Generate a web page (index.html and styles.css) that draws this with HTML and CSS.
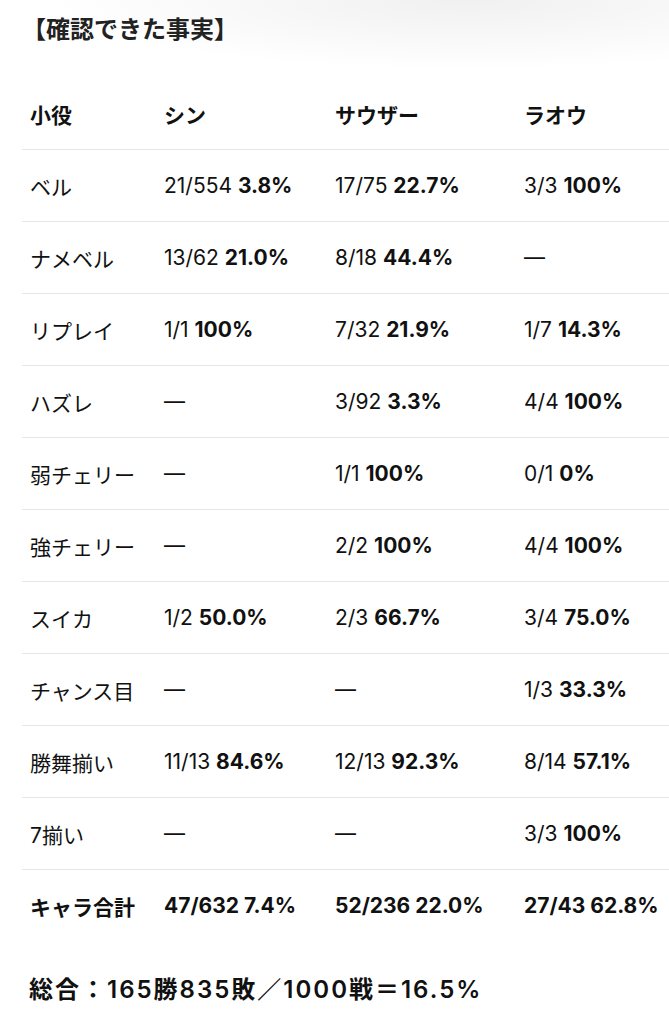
FILE: index.html
```html
<!DOCTYPE html>
<html lang="ja">
<head>
<meta charset="utf-8">
<link rel="stylesheet" href="styles.css">
</head>
<body>
<div class="page">
  <h3 class="title">【確認できた事実】</h3>
  <table class="stats">
    <colgroup>
      <col class="c1"><col class="c2"><col class="c3"><col class="c4">
    </colgroup>
    <thead>
      <tr><th>小役</th><th>シン</th><th>サウザー</th><th>ラオウ</th></tr>
    </thead>
    <tbody>
      <tr><td>ベル</td><td>21/554 <b>3.8%</b></td><td>17/75 <b>22.7%</b></td><td>3/3 <b>100%</b></td></tr>
      <tr><td>ナメベル</td><td>13/62 <b>21.0%</b></td><td>8/18 <b>44.4%</b></td><td>—</td></tr>
      <tr><td>リプレイ</td><td>1/1 <b>100%</b></td><td>7/32 <b>21.9%</b></td><td>1/7 <b>14.3%</b></td></tr>
      <tr><td>ハズレ</td><td>—</td><td>3/92 <b>3.3%</b></td><td>4/4 <b>100%</b></td></tr>
      <tr><td>弱チェリー</td><td>—</td><td>1/1 <b>100%</b></td><td>0/1 <b>0%</b></td></tr>
      <tr><td>強チェリー</td><td>—</td><td>2/2 <b>100%</b></td><td>4/4 <b>100%</b></td></tr>
      <tr><td>スイカ</td><td>1/2 <b>50.0%</b></td><td>2/3 <b>66.7%</b></td><td>3/4 <b>75.0%</b></td></tr>
      <tr><td>チャンス目</td><td>—</td><td>—</td><td>1/3 <b>33.3%</b></td></tr>
      <tr><td>勝舞揃い</td><td>11/13 <b>84.6%</b></td><td>12/13 <b>92.3%</b></td><td>8/14 <b>57.1%</b></td></tr>
      <tr><td>7揃い</td><td>—</td><td>—</td><td>3/3 <b>100%</b></td></tr>
      <tr class="total"><td>キャラ合計</td><td>47/632 7.4%</td><td>52/236 22.0%</td><td>27/43 62.8%</td></tr>
    </tbody>
  </table>
  <p class="summary">総合：165勝835敗／1000戦＝16.5%</p>
</div>
</body>
</html>
```

FILE: styles.css
```css
html, body {
  margin: 0;
  padding: 0;
}
body {
  background:
    radial-gradient(ellipse 420px 70px at 70% 0, rgba(0,0,0,0.06), rgba(0,0,0,0) 100%),
    #fff;
  background-repeat: no-repeat;
  color: #111;
  font-family: Inter, "Noto Sans CJK JP", sans-serif;
  overflow-x: hidden;
}
.page {
  padding: 13px 0 0 22px;
  width: 680px;
}
.title {
  margin: 0;
  font-size: 24px;
  line-height: 34px;
  font-weight: 700;
  color: #222;
}
.stats {
  margin-top: 31px;
  border-collapse: collapse;
  width: 654px;
  table-layout: fixed;
  font-size: 21px;
}
.c1 { width: 134px; }
.c2 { width: 171px; }
.c3 { width: 189px; }
.c4 { width: 160px; }
.stats th,
.stats td {
  height: 71px;
  padding: 0 0 0 8px;
  text-align: left;
  vertical-align: middle;
  white-space: nowrap;
}
.stats th {
  font-weight: 700;
}
.stats td {
  font-weight: 400;
}
.stats tr {
  border-bottom: 1px solid #e6e6e6;
}
.stats tr.total {
  border-bottom: none;
}
.stats tr.total td {
  font-weight: 700;
}
.stats b {
  font-weight: 700;
}
.summary {
  margin: 32px 0 0 7px;
  font-size: 24px;
  line-height: 34px;
  font-weight: 600;
  letter-spacing: 2px;
  color: #111;
}
```
